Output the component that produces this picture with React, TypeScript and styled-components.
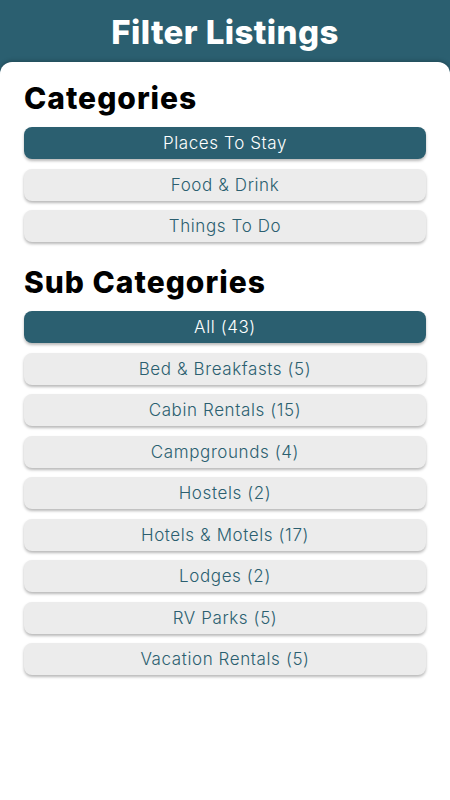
import React from "react";
import styled, { createGlobalStyle } from "styled-components";

const teal = "#2b5f70";

const GlobalStyle = createGlobalStyle`
  html, body {
    margin: 0;
    padding: 0;
    background: ${teal};
  }
  body {
    font-family: Inter, "Liberation Sans", sans-serif;
  }
`;

const Screen = styled.div`
  width: 450px;
  height: 800px;
  display: flex;
  flex-direction: column;
  background: ${teal};
`;

const Header = styled.header`
  height: 62px;
  display: flex;
  align-items: center;
  justify-content: center;
`;

const Title = styled.h1`
  margin: 2px 0 0;
  color: #fff;
  font-family: Inter, sans-serif;
  font-weight: 800;
  font-size: 33px;
  letter-spacing: 0.4px;
`;

const Card = styled.main`
  flex: 1;
  background: #fff;
  border-radius: 12px 12px 0 0;
  box-shadow: 0 -1px 4px rgba(0, 0, 0, 0.25);
  padding: 18px 24px 0;
`;

const SectionTitle = styled.h2`
  margin: 0 0 11px;
  color: #000;
  font-family: Inter, sans-serif;
  font-weight: 800;
  font-size: 30px;
  line-height: 36px;
  letter-spacing: 1px;
`;

const List = styled.div`
  display: flex;
  flex-direction: column;
  gap: 9.5px;
  margin-bottom: 22px;
`;

const Chip = styled.button<{ $active?: boolean }>`
  height: 32px;
  border: none;
  border-radius: 8px;
  background: ${p => (p.$active ? teal : "#ececec")};
  color: ${p => (p.$active ? "#fff" : teal)};
  box-shadow: 0 2px 3px rgba(0, 0, 0, 0.28);
  font-family: Inter, sans-serif;
  font-weight: 300;
  font-size: 17px;
  letter-spacing: 0.6px;
  padding: 0;
  cursor: pointer;
`;

const categories = ["Places To Stay", "Food & Drink", "Things To Do"];
const subCategories = [
  "All (43)",
  "Bed & Breakfasts (5)",
  "Cabin Rentals (15)",
  "Campgrounds (4)",
  "Hostels (2)",
  "Hotels & Motels (17)",
  "Lodges (2)",
  "RV Parks (5)",
  "Vacation Rentals (5)",
];

export default function App() {
  return (
    <Screen>
      <GlobalStyle />
      <Header>
        <Title>Filter Listings</Title>
      </Header>
      <Card>
        <SectionTitle>Categories</SectionTitle>
        <List>
          {categories.map((c, i) => (
            <Chip key={c} $active={i === 0}>
              {c}
            </Chip>
          ))}
        </List>
        <SectionTitle>Sub Categories</SectionTitle>
        <List>
          {subCategories.map((c, i) => (
            <Chip key={c} $active={i === 0}>
              {c}
            </Chip>
          ))}
        </List>
      </Card>
    </Screen>
  );
}
